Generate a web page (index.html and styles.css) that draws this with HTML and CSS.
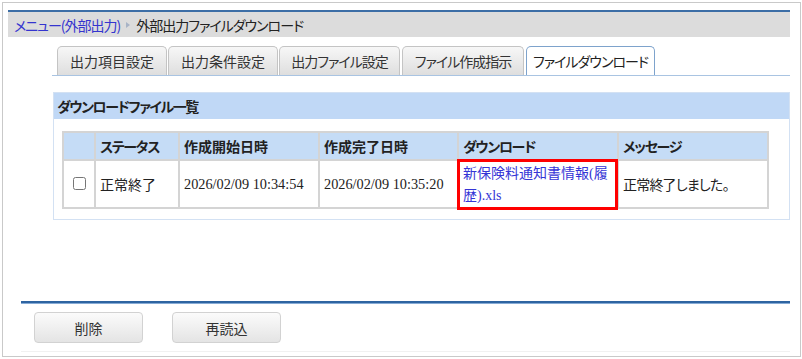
FILE: index.html
```html
<!DOCTYPE html>
<html lang="ja">
<head>
<meta charset="utf-8">
<title>外部出力ファイルダウンロード</title>
<link rel="stylesheet" href="styles.css">
</head>
<body>
<div class="frame">
  <div class="crumbbar">
    <a class="crumb-link" href="#">メニュー(外部出力)</a>
    <span class="crumb-arrow"></span>
    <span class="crumb-current">外部出力ファイルダウンロード</span>
  </div>

  <div class="tabs">
    <div class="tab tab-items">出力項目設定</div>
    <div class="tab tab-cond">出力条件設定</div>
    <div class="tab tab-file kana">出力ファイル設定</div>
    <div class="tab tab-make kana">ファイル作成指示</div>
    <div class="tab tab-dl tab-active kana">ファイルダウンロード</div>
  </div>

  <div class="panel">
    <div class="panel-title">ダウンロードファイル一覧</div>
    <table class="grid">
      <colgroup>
        <col class="c-check">
        <col class="c-status">
        <col class="c-start">
        <col class="c-end">
        <col class="c-dl">
        <col class="c-msg">
      </colgroup>
      <thead>
        <tr>
          <th></th>
          <th class="kana">ステータス</th>
          <th>作成開始日時</th>
          <th>作成完了日時</th>
          <th class="kana">ダウンロード</th>
          <th class="kana">メッセージ</th>
        </tr>
      </thead>
      <tbody>
        <tr>
          <td class="cell-check"><input type="checkbox"></td>
          <td class="cell-jp">正常終了</td>
          <td class="cell-date">2026/02/09 10:34:54</td>
          <td class="cell-date">2026/02/09 10:35:20</td>
          <td class="cell-dl"><a class="dl-link" href="#">新保険料通知書情報(履歴).xls</a></td>
          <td class="cell-jp kana-light">正常終了しました。</td>
        </tr>
      </tbody>
    </table>
  </div>

  <div class="divider"></div>
  <div class="actions">
    <button class="btn" type="button">削除</button>
    <button class="btn" type="button">再読込</button>
  </div>
</div>
</body>
</html>
```

FILE: styles.css
```css
html, body {
  margin: 0;
  padding: 0;
  background: #ffffff;
}

body {
  font-family: "Noto Sans CJK JP", "Noto Sans", sans-serif;
  font-size: 14px;
  color: #222;
  font-feature-settings: "palt";
}

.kana {
  letter-spacing: -1px;
}

.kana-light {
  letter-spacing: -0.8px;
}

.frame {
  box-sizing: border-box;
  margin: 2px 0 0 2px;
  width: 799px;
  height: 355px;
  border: 1px solid #c9c9c9;
  padding: 7px 10px 0 5px;
}

/* breadcrumb bar */
.crumbbar {
  height: 25px;
  border-top: 2px solid #3c6ea6;
  background: #dcdcdc;
  display: flex;
  align-items: center;
  padding-left: 6px;
  font-size: 14px;
  line-height: 1;
  letter-spacing: -1px;
}

.crumb-link {
  color: #3434cf;
  text-decoration: none;
}

.crumb-arrow {
  width: 0;
  height: 0;
  border-left: 4px solid #a7b3c6;
  border-top: 3px solid transparent;
  border-bottom: 3px solid transparent;
  margin: 0 6px 0 6px;
}

.crumb-current {
  color: #222;
}

/* tabs */
.tabs {
  margin: 9px 0 0 44px;
  padding-left: 5px;
  display: flex;
  align-items: flex-end;
  gap: 1px;
  border-bottom: 1px solid #a9c4e2;
}

.tab {
  box-sizing: border-box;
  height: 29px;
  display: flex;
  align-items: center;
  justify-content: center;
  border: 1px solid #c4c4c4;
  border-bottom: none;
  border-radius: 5px 5px 0 0;
  background: linear-gradient(#f7f7f7, #dedede);
  color: #333;
  font-size: 14px;
  white-space: nowrap;
}

.tab-items { width: 110px; }
.tab-cond { width: 110px; }
.tab-file { width: 121px; }
.tab-make { width: 122px; margin-left: 1px; }
.tab-dl { width: 129px; margin-left: 1px; }

.tab-active {
  background: #ffffff;
  border-color: #7ea3cc;
  color: #222;
}

/* panel */
.panel {
  margin: 16px 0 0 45px;
  border: 1px solid #d3e1f3;
}

.panel-title {
  height: 26px;
  display: flex;
  align-items: center;
  padding-left: 3px;
  background: #c0d8f6;
  font-weight: bold;
  font-size: 14px;
  color: #222;
  letter-spacing: -1.4px;
}

.grid {
  margin: 12px 0 10px 8px;
  width: 705px;
  table-layout: fixed;
  border-collapse: collapse;
  border: 2px solid #d4d4d4;
}

.c-check { width: 32px; }
.c-status { width: 84px; }
.c-start { width: 140px; }
.c-end { width: 139px; }
.c-dl { width: 160px; }
.c-msg { width: 150px; }

.grid th {
  height: 26px;
  background: #c5dcf6;
  border: 2px solid #d4d4d4;
  text-align: left;
  padding: 0 4px;
  font-weight: bold;
  font-size: 14px;
  color: #222;
}

.grid th.kana {
  letter-spacing: -1.3px;
}

.grid td {
  height: 46px;
  border: 2px solid #d4d4d4;
  padding: 0 4px;
  vertical-align: middle;
  background: #fff;
}

.cell-check {
  text-align: center;
}

.cell-check input {
  margin: 2px 0 0 0;
  width: 13px;
  height: 13px;
}

.cell-jp {
  font-size: 14px;
  color: #222;
}

.cell-date {
  font-family: "Liberation Serif", "Noto Sans CJK JP", serif;
  font-size: 14.3px;
  color: #222;
  white-space: nowrap;
}

.cell-dl {
  position: relative;
  line-height: 21px;
}

.cell-dl::after {
  content: "";
  position: absolute;
  left: -2px;
  right: -1px;
  top: -2px;
  bottom: -3px;
  border: 3px solid #ff0000;
  pointer-events: none;
}

.dl-link {
  font-family: "Liberation Serif", "Noto Sans CJK JP", serif;
  color: #3535d6;
  text-decoration: none;
  font-size: 14px;
}

/* footer */
.divider {
  margin: 81px 0 0 13px;
  height: 3px;
  background: linear-gradient(#2e64a1 0, #2e64a1 2px, #86abd6 2px, #86abd6 3px);
}

.actions {
  margin-left: 13px;
  display: flex;
  gap: 29px;
  padding: 8px 0 8px 13px;
  border-bottom: 1px solid #f1f1f1;
}

.btn {
  box-sizing: border-box;
  width: 109px;
  height: 31px;
  border: 1px solid #d2d2d2;
  border-radius: 4px;
  background: linear-gradient(#fbfbfb, #e4e4e4);
  font-family: "Noto Sans CJK JP", "Noto Sans", sans-serif;
  font-size: 14px;
  color: #333;
  padding: 0;
}
```
